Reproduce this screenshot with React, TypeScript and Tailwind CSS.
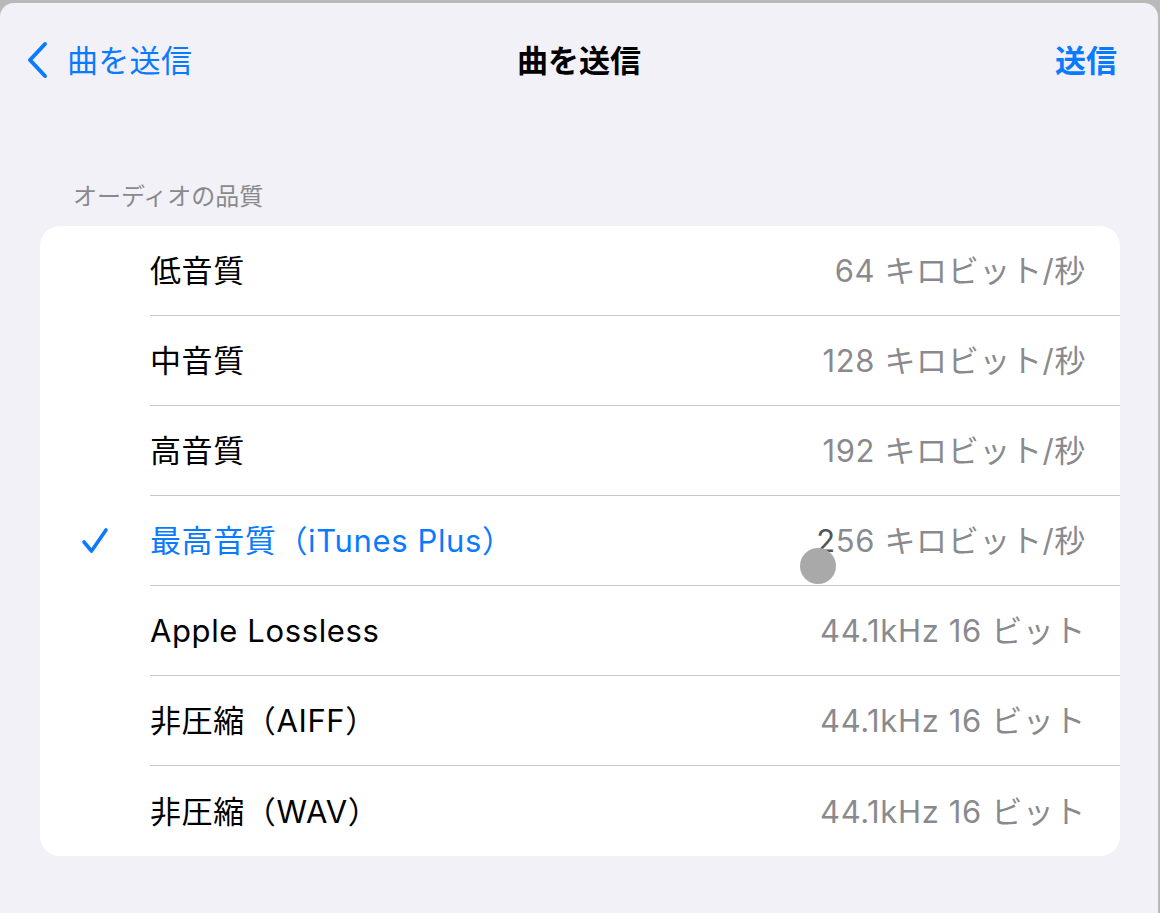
import React from 'react';

const options = [
  { label: '低音質', value: '64 キロビット/秒' },
  { label: '中音質', value: '128 キロビット/秒' },
  { label: '高音質', value: '192 キロビット/秒' },
  { label: '最高音質（iTunes Plus）', value: '256 キロビット/秒', selected: true },
  { label: 'Apple Lossless', value: '44.1kHz 16 ビット' },
  { label: '非圧縮（AIFF）', value: '44.1kHz 16 ビット' },
  { label: '非圧縮（WAV）', value: '44.1kHz 16 ビット' },
];

const font = "font-['Inter','Noto_Sans_CJK_JP',sans-serif]";

export default function App() {
  return (
    <div className={`relative w-[1160px] h-[913px] overflow-hidden bg-[#b9b9b9] pt-[3px] ${font}`}>
      <div className="h-full w-[1158px] rounded-t-[14px] bg-[#f2f1f7]">
        {/* nav bar */}
        <div className="flex h-[114px] items-center">
          <div className="flex flex-1 items-center pl-[27px]">
            <svg width="22" height="38" viewBox="0 0 22 38" fill="none">
              <path d="M18 3 L3 19 L18 35" stroke="#0a7aff" strokeWidth="4" strokeLinecap="round" strokeLinejoin="round" />
            </svg>
            <span className="ml-[18px] text-[31px] leading-none tracking-[0.01em] text-[#0a7aff]">曲を送信</span>
          </div>
          <div className="pl-[14px] text-[31px] font-bold leading-none text-black">曲を送信</div>
          <div className="flex flex-1 justify-end pr-[41px]">
            <span className="text-[31px] font-bold leading-none text-[#0a7aff]">送信</span>
          </div>
        </div>

        <div className="pl-[73px] pt-[68px] pb-[17px] text-[24px] leading-[24px] text-[#8a8a8e]">オーディオの品質</div>

        <div className="mx-[40px] w-[1080px] overflow-hidden rounded-[20px] bg-white">
          {options.map((o, i) => (
            <div key={o.label} className="flex h-[90px]">
              <div className="flex w-[110px] items-center justify-center">
                {o.selected && (
                  <svg width="28" height="28" viewBox="0 0 28 28" fill="none">
                    <path d="M3 15 L10.5 24 L25 3" stroke="#0a7aff" strokeWidth="3.6" strokeLinecap="round" strokeLinejoin="round" />
                  </svg>
                )}
              </div>
              <div
                className={`flex flex-1 items-center justify-between pr-[34px] ${
                  i < options.length - 1 ? 'border-b border-[#c8c7cc]' : ''
                }`}
              >
                <span className={`text-[31px] leading-none tracking-[0.02em] ${o.selected ? 'text-[#0a7aff]' : 'text-black'}`}>
                  {o.label}
                </span>
                <span className="text-[31px] leading-none tracking-[0.02em] text-[#8a8a8e]">
                  {o.selected ? (
                    <>
                      <span className="text-[#555558]">2</span>
                      {o.value.slice(1)}
                    </>
                  ) : (
                    o.value
                  )}
                </span>
              </div>
            </div>
          ))}
        </div>
      </div>

      {/* touch indicator */}
      <div className="absolute left-[800px] top-[548px] h-[36px] w-[36px] rounded-full bg-[#a9a9a9]" />
    </div>
  );
}
